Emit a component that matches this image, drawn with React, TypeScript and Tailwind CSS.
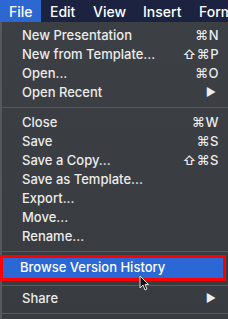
import type { ReactNode } from 'react'

type Item = { label: string; shortcut?: ReactNode; arrow?: boolean }

const GROUP_A: Item[] = [
  { label: 'New Presentation', shortcut: '⌘N' },
  { label: 'New from Template...', shortcut: '⇧⌘P' },
  { label: 'Open...', shortcut: '⌘O' },
  { label: 'Open Recent', arrow: true },
]

const GROUP_B: Item[] = [
  { label: 'Close', shortcut: '⌘W' },
  { label: 'Save', shortcut: '⌘S' },
  { label: 'Save a Copy...', shortcut: '⇧⌘S' },
  { label: 'Save as Template...' },
  { label: 'Export...' },
  { label: 'Move...' },
  { label: 'Rename...' },
]

function Row({ item }: { item: Item }) {
  return (
    <div className="h-[19px] flex items-center justify-between pl-[20px] pr-[9px]">
      <span>{item.label}</span>
      {item.shortcut && <span className="tracking-[0.5px]">{item.shortcut}</span>}
      {item.arrow && <span className="text-[11px] pr-[3px]">▶</span>}
    </div>
  )
}

function Separator({ h = 11 }: { h?: number }) {
  return (
    <div className={`${h === 11 ? 'h-[11px]' : 'h-[8px]'} flex items-center`}>
      <div className="h-px w-full bg-[#57595e]" />
    </div>
  )
}

export default function App() {
  return (
    <div
      className="w-[228px] h-[319px] overflow-hidden bg-[#3a3d42] text-[#ececec] text-[13px] font-medium relative"
      style={{ fontFamily: 'Inter, "Liberation Sans", Arial, sans-serif' }}
    >
      {/* Menu bar */}
      <div className="h-[22px] bg-[#1b2341] flex items-center text-[14px] text-white whitespace-nowrap overflow-hidden">
        <div className="h-full w-[41px] shrink-0 bg-[#2d67d2] flex items-center pl-[9px]">File</div>
        <span className="ml-[9px] w-[43px] shrink-0">Edit</span>
        <span className="w-[50px] shrink-0">View</span>
        <span className="w-[56px] shrink-0">Insert</span>
        <span className="shrink-0">Form</span>
      </div>

      <div className="border-l-2 border-[#55585c] h-full bg-gradient-to-b from-[#3c3f44] to-[#383b40]">
        <div className="pt-[4px]">
          {GROUP_A.map(i => <Row key={i.label} item={i} />)}
        </div>
        <Separator />
        {GROUP_B.map(i => <Row key={i.label} item={i} />)}
        <Separator />
        <div className="h-[26px] mt-[-2px] border-[3px] border-[#ff0000] bg-[#2b68d6] flex items-center pl-[17px] mr-[2px] ml-[-2px] text-white">
          Browse Version History
        </div>
        <Separator h={8} />
        <Row item={{ label: 'Share', arrow: true }} />
        <Separator />
      </div>

      {/* mouse cursor */}
      <svg className="absolute left-[139px] top-[275px]" width="10" height="16" viewBox="0 0 10 16">
        <path d="M1 1 L1 13 L4 10 L6 15 L8 14 L6 9.5 L9.5 9.5 Z" fill="#111" stroke="#ddd" strokeWidth="1" />
      </svg>
    </div>
  )
}
